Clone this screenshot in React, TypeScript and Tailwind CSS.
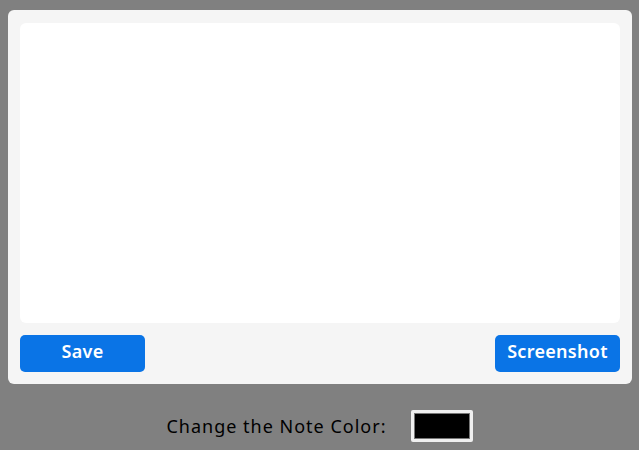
export default function App() {
  return (
    <div className="w-[639px] h-[450px] bg-[#808080] overflow-hidden" style={{ fontFamily: '"Noto Sans", sans-serif' }}>
      <div className="ml-[8px] mt-[10px] w-[624px] h-[374px] bg-[#f5f5f5] rounded-[6px] px-[12px] pt-[13px] flex flex-col">
        <div className="w-[600px] h-[300px] bg-white rounded-[6px]" />
        <div className="flex justify-between mt-[12px]">
          <button className="w-[125px] h-[37px] bg-[#0a74e6] rounded-[5px] text-white font-semibold text-[18px] tracking-[0.3px] leading-none pb-[6px]">Save</button>
          <button className="w-[125px] h-[37px] bg-[#0a74e6] rounded-[5px] text-white font-semibold text-[18px] tracking-[0.3px] leading-none pb-[6px]">Screenshot</button>
        </div>
      </div>
      <div className="flex items-center justify-center mt-[26px] gap-[24px]">
        <span className="text-[18px] text-black leading-none tracking-[1px]">Change the Note Color:</span>
        <div className="w-[62px] h-[32px] bg-[#f0f0f0] rounded-[2px] p-[3px]">
          <div className="w-full h-full bg-black border border-[#777]" />
        </div>
      </div>
    </div>
  );
}
